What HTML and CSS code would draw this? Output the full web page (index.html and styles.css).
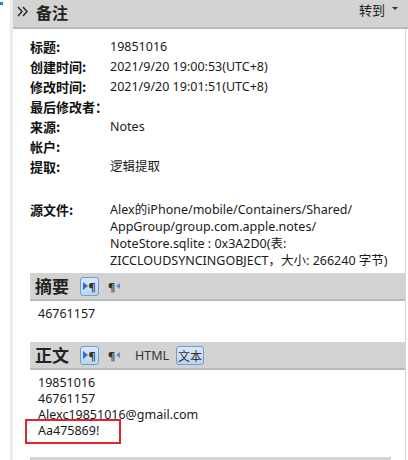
FILE: index.html
```html
<!DOCTYPE html>
<html lang="zh">
<head>
<meta charset="utf-8">
<link rel="stylesheet" href="styles.css">
</head>
<body>
<div class="app">
  <div class="gutter"><span class="mark"></span></div>
  <div class="panel">
    <div class="header">
      <div class="title">
        <svg class="chev" width="12" height="11" viewBox="0 0 12 11"><polyline points="1,1 5,5.5 1,10" fill="none" stroke="#2b2b2b" stroke-width="1.5"/><polyline points="6,1 10,5.5 6,10" fill="none" stroke="#2b2b2b" stroke-width="1.5"/></svg>
        <span class="title-text">备注</span>
      </div>
      <div class="goto">转到 <span class="caret"></span></div>
    </div>
    <div class="content">
      <div class="fields">
        <div class="label">标题:</div><div class="value">19851016</div>
        <div class="label">创建时间:</div><div class="value">2021/9/20 19:00:53(UTC+8)</div>
        <div class="label">修改时间:</div><div class="value">2021/9/20 19:01:51(UTC+8)</div>
        <div class="label">最后修改者：</div><div class="value"></div>
        <div class="label">来源:</div><div class="value">Notes</div>
        <div class="label">帐户:</div><div class="value"></div>
        <div class="label">提取:</div><div class="value">逻辑提取</div>
      </div>
      <div class="fields source">
        <div class="label">源文件:</div>
        <div class="value">Alex的iPhone/mobile/Containers/Shared/<br>AppGroup/group.com.apple.notes/<br>NoteStore.sqlite : 0x3A2D0(表:<br>ZICCLOUDSYNCINGOBJECT，大小: 266240 字节)</div>
      </div>

      <div class="section">
        <div class="sec-head">
          <span class="sec-title">摘要</span>
          <span class="btn active"><span class="tri-r"></span><span class="pil">¶</span></span>
          <span class="btn plain"><span class="pil">¶</span><span class="tri-l"></span></span>
        </div>
        <div class="sec-body">46761157</div>
      </div>

      <div class="section body-sec">
        <div class="sec-head">
          <span class="sec-title">正文</span>
          <span class="btn active"><span class="tri-r"></span><span class="pil">¶</span></span>
          <span class="btn plain"><span class="pil">¶</span><span class="tri-l"></span></span>
          <span class="mode">HTML</span>
          <span class="mode on">文本</span>
        </div>
        <div class="sec-body lines">
          <div>19851016</div>
          <div>46761157</div>
          <div>Alexc19851016@gmail.com</div>
          <div class="hl">Aa475869!</div>
        </div>
      </div>
      <div class="bottom-bar"></div>
    </div>
  </div>
</div>
</body>
</html>
```

FILE: styles.css
```css
* { box-sizing: border-box; }
html, body { margin: 0; padding: 0; background: #fff; }
body {
  font-family: "Noto Sans", "Noto Sans CJK SC", sans-serif;
  font-size: 12.5px;
  color: #1a1a1a;
  width: 408px;
  height: 460px;
  overflow: hidden;
}
.app { display: flex; height: 460px; }
.gutter {
  width: 13px;
  flex: none;
  border-right: 3px solid #ececec;
  position: relative;
}
.mark {
  position: absolute;
  left: 0; top: 2px;
  width: 3px; height: 3px;
  background: #2f7ce0;
}
.panel { flex: 1; display: flex; flex-direction: column; min-width: 0; }
.header {
  height: 29px;
  flex: none;
  background: #d3d3d3;
  border-bottom: 2px solid #bababa;
  display: flex;
  align-items: flex-start;
  justify-content: space-between;
  padding: 0 10px 0 4px;
}
.title {
  display: flex;
  align-items: flex-start;
  font-family: "Noto Sans CJK SC", sans-serif;
  font-weight: 700;
  font-size: 16px;
  line-height: 24px;
  color: #222;
}
.title-text { line-height: 24px; }
.chev { margin: 6px 7px 0 0; }
.goto {
  font-family: "Noto Sans CJK SC", sans-serif;
  font-size: 13px;
  line-height: 19px;
  color: #222;
  display: flex;
  align-items: center;
  height: 19px;
}
.caret {
  margin-left: 7px;
  margin-top: -2px;
  width: 0; height: 0;
  border-left: 3px solid transparent;
  border-right: 3px solid transparent;
  border-top: 3px solid #333;
}
.content {
  flex: 1;
  border-right: 1px solid #d6d6d6;
  margin-right: 2px;
  padding: 8px 0 0 17px;
}
.fields {
  display: grid;
  grid-template-columns: 80px 1fr;
  line-height: 20px;
}
.label {
  font-family: "Noto Sans CJK SC", sans-serif;
  font-weight: 700;
  font-size: 13px;
  color: #111;
}
.value { min-height: 20px; }
.source { margin-top: 24px; line-height: 17px; }
.section { margin-top: 4px; }
.sec-head {
  height: 28px;
  background: #d3d3d3;
  border-bottom: 2px solid #bababa;
  display: flex;
  align-items: center;
  padding-left: 5px;
}
.sec-title {
  font-family: "Noto Sans CJK SC", sans-serif;
  font-weight: 700;
  font-size: 17px;
  line-height: 22px;
  color: #222;
  margin-right: 11px;
}
.btn {
  width: 19px; height: 19px;
  display: inline-flex;
  align-items: center;
  justify-content: center;
  border: 1px solid transparent;
  border-radius: 3px;
  margin-right: 8px;
}
.btn.plain { justify-content: flex-start; padding-left: 0; }
.btn.active {
  border-color: #6c9fd8;
  background: linear-gradient(#d9e8f8, #bcd5f1);
}
.pil { font-size: 11px; font-weight: 700; color: #333; line-height: 1; }
.tri-r {
  width: 0; height: 0;
  border-top: 4px solid transparent;
  border-bottom: 4px solid transparent;
  border-left: 5px solid #2f6fc5;
}
.tri-l {
  width: 0; height: 0;
  border-top: 3px solid transparent;
  border-bottom: 3px solid transparent;
  border-right: 4px solid #5a8fd0;
  margin-left: 1px;
}
.mode {
  color: #333;
  margin-left: 0;
  height: 19px;
  line-height: 17px;
  border: 1px solid transparent;
  border-radius: 3px;
}
.mode.on {
  font-family: "Noto Sans CJK SC", sans-serif;
  font-size: 12px;
  padding: 0 1px;
  border-color: #6c9fd8;
  background: linear-gradient(#d9e8f8, #bcd5f1);
  margin-left: 6px;
}
.sec-body { padding: 3px 0 0 8px; line-height: 20px; }
.lines { line-height: 16px; padding-top: 5px; }
.hl { position: relative; }
.hl::after {
  content: "";
  position: absolute;
  left: -13px;
  top: -4px;
  width: 92px;
  height: 21px;
  border: 2px solid #e0242b;
}
.body-sec { margin-top: 18px; }
.bottom-bar {
  margin-top: 18px;
  height: 4px;
  background: #d3d3d3;
  width: 361px;
}
```
